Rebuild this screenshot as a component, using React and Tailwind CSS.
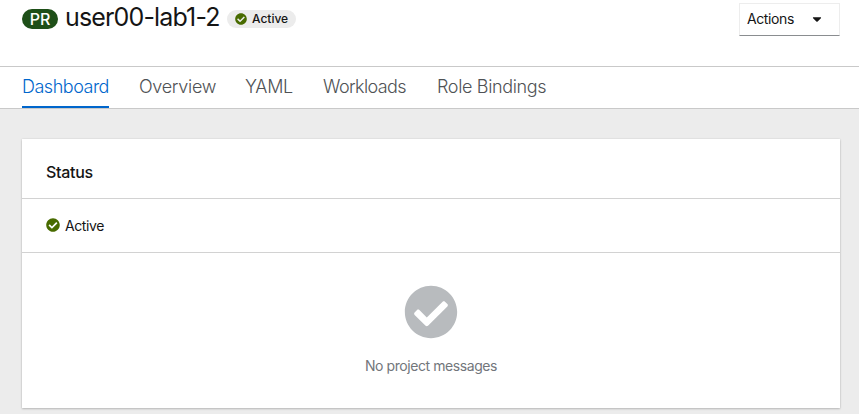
import { FaCheckCircle, FaCaretDown } from "react-icons/fa";

const tabs = [
  { label: "Dashboard", box: "w-[87px] border-[#0066cc] text-[#0066cc]", text: "tracking-[-0.48px]" },
  { label: "Overview", box: "w-[76px] border-transparent text-[#4f5255]", text: "tracking-[-0.3px]" },
  { label: "YAML", box: "w-[48px] border-transparent text-[#4f5255]", text: "tracking-[-0.3px]" },
  { label: "Workloads", box: "w-[84px] border-transparent text-[#4f5255]", text: "tracking-[-0.6px]" },
  { label: "Role Bindings", box: "w-[110px] border-transparent text-[#4f5255]", text: "tracking-[-0.35px]" },
];

function Header() {
  return (
    <header className="flex h-[67px] items-start justify-between border-b border-[#c9c9c9] pl-[22px] pr-[19px]">
      <div className="flex items-start">
        <span className="mt-[9px] flex h-5 w-9 items-center justify-center rounded-full bg-[#1e4f18] text-base font-medium leading-5 text-white">
          PR
        </span>
        <h1 className="ml-[7px] mt-px w-[155px] whitespace-nowrap text-[25px] leading-8 tracking-[-0.85px] text-[#151515]">
          user00-lab1-2
        </h1>
        <span className="ml-[7px] mt-[10px] flex h-[18px] w-[69px] items-center rounded-full bg-[#ececec] pl-2 text-xs font-medium text-[#151515]">
          <FaCheckCircle className="mr-[5px] size-3 shrink-0 text-[#486b00]" />
          Active
        </span>
      </div>
      <button className="mt-[3px] flex h-[33px] w-[101px] items-center border border-[#ededed] border-b-[#8a8d90] pb-px pl-[7px] text-sm text-[#151515]">
        <span className="w-[63px] text-left tracking-[-0.4px]">Actions</span>
        <FaCaretDown className="size-[14px]" />
      </button>
    </header>
  );
}

function Tabs() {
  return (
    <nav className="flex h-[42px] gap-[30px] border-b border-[#c9c9c9] pl-[22px]">
      {tabs.map((tab) => (
        <a key={tab.label} className={`h-[41px] whitespace-nowrap border-b-2 text-lg font-light leading-10 ${tab.box}`}>
          <span className={tab.text}>{tab.label}</span>
        </a>
      ))}
    </nav>
  );
}

export default function App() {
  return (
    <div className="flex h-[414px] flex-col overflow-hidden bg-white font-['Inter','Liberation_Sans',sans-serif]">
      <Header />
      <Tabs />
      <main className="flex-1 bg-[#ececec] pl-[22px] pr-[19px] pt-[30px]">
        <section className="h-[269px] bg-white shadow-[0_1px_2px_rgba(3,3,3,0.2),0_0_2px_rgba(3,3,3,0.1)]">
          <h2 className="h-[60px] border-b border-[#d2d2d2] pl-6 pt-[21px] text-base font-medium leading-6 tracking-[-0.3px] text-[#151515]">
            Status
          </h2>
          <div className="flex h-[54px] items-center border-b border-[#d2d2d2] pl-6 text-sm text-[#151515]">
            <FaCheckCircle className="mb-px mr-[5px] size-[14px] text-[#486b00]" />
            <span className="tracking-[-0.4px]">Active</span>
          </div>
          <div className="flex flex-col items-center pt-[32px]">
            <FaCheckCircle className="size-[54px] text-[#b8bbbe]" />
            <p className="mt-[17px] text-sm leading-5 tracking-[-0.42px] text-[#72767b]">No project messages</p>
          </div>
        </section>
      </main>
    </div>
  );
}
